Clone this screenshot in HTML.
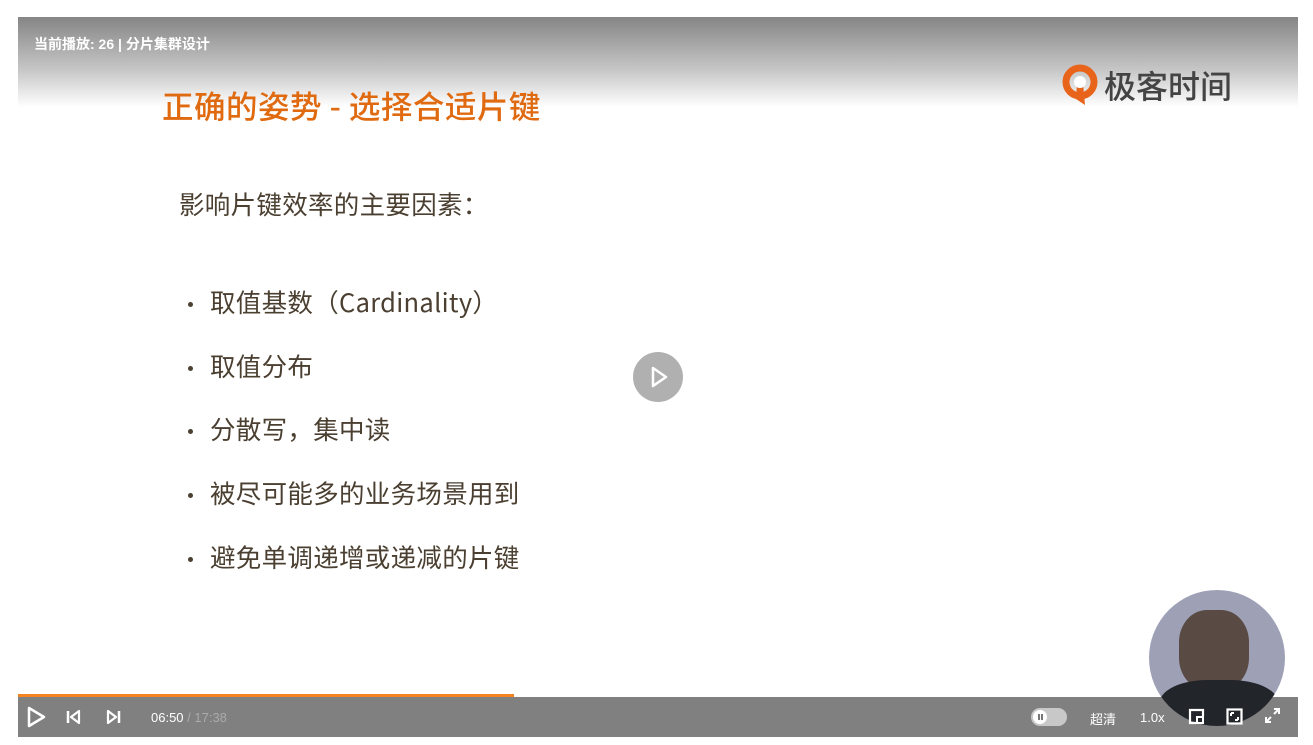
<!DOCTYPE html>
<html><head><meta charset="utf-8"><style>
*{margin:0;padding:0;box-sizing:border-box}
body{width:1313px;height:745px;background:#fff;position:relative;overflow:hidden;font-family:"Liberation Sans","Noto Sans CJK SC",sans-serif}
#v{position:absolute;left:18px;top:17px;width:1280px;height:720px;background:#fff;overflow:hidden}
.grad{position:absolute;left:0;top:0;width:1280px;height:90px;background:linear-gradient(#858585,#c8c8c8 60%,#fff)}
.cur{position:absolute;left:16px;top:17px;color:#fff;font-size:14px;font-weight:bold}
.title{position:absolute;left:144px;top:65px;color:#e06a10;font-size:31.5px;font-family:"Noto Sans CJK SC",sans-serif;font-weight:500;letter-spacing:0.5px}
.logo{position:absolute;left:1043px;top:46px;height:44px;display:flex;align-items:center}
.logo span{font-size:32px;color:#444;font-family:"Noto Sans CJK SC",sans-serif;font-weight:500;margin-left:5px;letter-spacing:0}
.t{position:absolute;color:#4a3f30;font-size:25.5px;font-family:"Noto Sans CJK SC",sans-serif;font-weight:400;letter-spacing:0.3px}
.dot{position:absolute;width:5px;height:5px;border-radius:50%;background:#4a3f30}
.play{position:absolute;left:615px;top:335px;width:50px;height:50px;border-radius:50%;background:#b0b0b0}
.bar{position:absolute;left:0;top:680px;width:1280px;height:40px;background:#808080}
.prog{position:absolute;left:0;top:677px;width:496px;height:3px;background:#f5831f}
.w{color:#fff;position:absolute;font-size:13px}
.cam{position:absolute;left:1131px;top:573px;width:136px;height:136px;border-radius:50%;background:#9ea1b6;overflow:hidden}
</style></head><body>
<div id="v">
<div class="grad"></div>
<div class="cur">当前播放: 26 | 分片集群设计</div>
<div class="title">正确的姿势 - 选择合适片键</div>
<div class="logo"><svg width="38" height="44" viewBox="0 0 38 44"><circle cx="19" cy="19" r="14" fill="none" stroke="#e8641b" stroke-width="7"/><path d="M16 20 L22 20 L24 42 L15 36Z" fill="#e8641b"/><circle cx="19" cy="19" r="6" fill="#fff"/></svg><span>极客时间</span></div>
<div class="t" style="left:161px;top:168px">影响片键效率的主要因素：</div>
<div class="dot" style="left:170px;top:285px"></div><div class="t" style="left:192px;top:266px">取值基数（Cardinality）</div>
<div class="dot" style="left:170px;top:349px"></div><div class="t" style="left:192px;top:330px">取值分布</div>
<div class="dot" style="left:170px;top:412px"></div><div class="t" style="left:192px;top:393px">分散写，集中读</div>
<div class="dot" style="left:170px;top:476px"></div><div class="t" style="left:192px;top:457px">被尽可能多的业务场景用到</div>
<div class="dot" style="left:170px;top:540px"></div><div class="t" style="left:192px;top:521px">避免单调递增或递减的片键</div>
<div class="play"><svg width="50" height="50"><path d="M20 16 L33 25 L20 34Z" fill="none" stroke="#fff" stroke-width="2.5" stroke-linejoin="round"/></svg></div>
<div class="bar"></div>
<div class="prog"></div>
<svg style="position:absolute;left:8px;top:688px" width="22" height="24"><path d="M3 3 L18 12 L3 21Z" fill="none" stroke="#fff" stroke-width="2.5" stroke-linejoin="round"/></svg>
<svg style="position:absolute;left:48px;top:692px" width="16" height="16"><path d="M2 2V14" stroke="#fff" stroke-width="2.5"/><path d="M13 2L5 8L13 14Z" fill="none" stroke="#fff" stroke-width="2.2" stroke-linejoin="round"/></svg>
<svg style="position:absolute;left:87px;top:692px" width="16" height="16"><path d="M14 2V14" stroke="#fff" stroke-width="2.5"/><path d="M3 2L11 8L3 14Z" fill="none" stroke="#fff" stroke-width="2.2" stroke-linejoin="round"/></svg>
<div class="w" style="left:133px;top:693px">06:50 <span style="color:#aaa">/ 17:38</span></div>
<div class="cam"><div style="position:absolute;left:30px;top:20px;width:70px;height:80px;border-radius:40%;background:#5a4a44"></div><div style="position:absolute;left:10px;top:90px;width:120px;height:60px;border-radius:40% 40% 0 0;background:#22252a"></div></div>
<div style="position:absolute;left:1013px;top:691px;width:36px;height:18px;border-radius:9px;background:#c8c8c8"><div style="position:absolute;left:2px;top:2px;width:14px;height:14px;border-radius:50%;background:#fff"></div><div style="position:absolute;left:7px;top:6px;width:1.5px;height:6px;background:#777"></div><div style="position:absolute;left:10px;top:6px;width:1.5px;height:6px;background:#777"></div></div>
<div class="w" style="left:1072px;top:692px">超清</div>
<div class="w" style="left:1122px;top:693px">1.0x</div>
<svg style="position:absolute;left:1170px;top:691px" width="17" height="17"><path d="M8 15H2V2H15V8" fill="none" stroke="#fff" stroke-width="2.2"/><rect x="9" y="9" width="6" height="6" fill="none" stroke="#fff" stroke-width="2"/></svg>
<svg style="position:absolute;left:1208px;top:691px" width="17" height="17"><rect x="1.5" y="1.5" width="14" height="14" fill="none" stroke="#fff" stroke-width="2.2"/><path d="M5 5H8M5 5V8M12 12H9M12 12V9" stroke="#fff" stroke-width="2"/></svg>
<svg style="position:absolute;left:1246px;top:690px" width="17" height="17"><path d="M10 2H15V7M15 2L10 7M7 15H2V10M2 15L7 10" fill="none" stroke="#fff" stroke-width="2"/></svg>
</div>
</body></html>
